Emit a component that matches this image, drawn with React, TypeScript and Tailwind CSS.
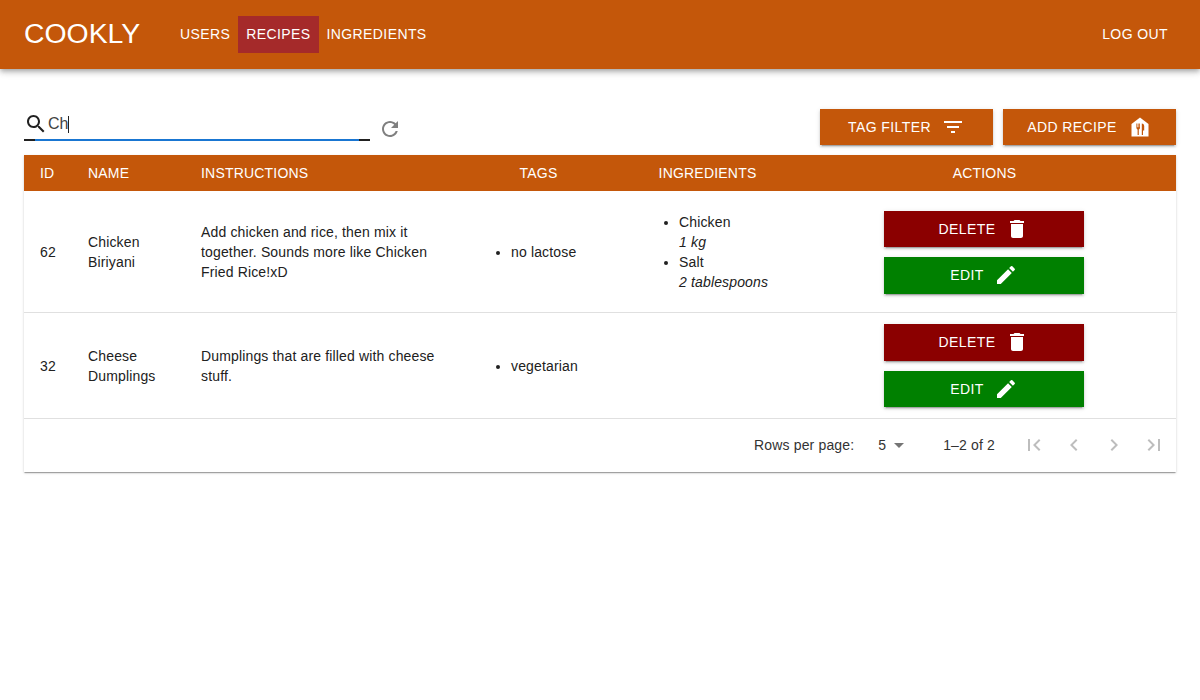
const FONT = "font-['Liberation_Sans',Arial,sans-serif]";

const ICONS = {
  search:
    "M15.5 14h-.79l-.28-.27C15.41 12.59 16 11.11 16 9.5 16 5.91 13.09 3 9.5 3S3 5.91 3 9.5 5.91 16 9.5 16c1.61 0 3.09-.59 4.23-1.57l.27.28v.79l5 4.99L20.49 19l-4.99-5zm-6 0C7.01 14 5 11.99 5 9.5S7.01 5 9.5 5 14 7.01 14 9.5 11.99 14 9.5 14z",
  refresh:
    "M17.65 6.35C16.2 4.9 14.21 4 12 4c-4.42 0-7.99 3.58-7.99 8s3.57 8 7.99 8c3.73 0 6.84-2.55 7.73-6h-2.08c-.82 2.33-3.04 4-5.65 4-3.31 0-6-2.69-6-6s2.69-6 6-6c1.66 0 3.14.69 4.22 1.78L13 11h7V4l-2.35 2.35z",
  filter: "M10 18h4v-2h-4v2zM3 6v2h18V6H3zm3 7h12v-2H6v2z",
  trash:
    "M6 19c0 1.1.9 2 2 2h8c1.1 0 2-.9 2-2V7H6v12zM19 4h-3.5l-1-1h-5l-1 1H5v2h14V4z",
  edit:
    "M3 17.25V21h3.75L17.81 9.94l-3.75-3.75L3 17.25zM20.71 7.04c.39-.39.39-1.02 0-1.41l-2.34-2.34a.9959.9959 0 0 0-1.41 0l-1.83 1.83 3.75 3.75 1.83-1.83z",
  first: "M18.41 16.59L13.82 12l4.59-4.59L17 6l-6 6 6 6zM6 6h2v12H6z",
  prev: "M15.41 7.41L14 6l-6 6 6 6 1.41-1.41L10.83 12z",
  next: "M10 6L8.59 7.41 13.17 12l-4.58 4.59L10 18l6-6z",
  last: "M5.59 7.41L10.18 12l-4.59 4.59L7 18l6-6-6-6zM16 6h2v12h-2z",
  dropdown: "M7 10l5 5 5-5z",
};

function Icon({ name, className }: { name: keyof typeof ICONS; className: string }) {
  return (
    <svg viewBox="0 0 24 24" fill="currentColor" className={className}>
      <path d={ICONS[name]} />
    </svg>
  );
}

function RecipeIcon() {
  return (
    <svg viewBox="0 0 24 24" className="ml-[11px] h-6 w-6">
      <path d="M12 2.5 20.5 9v12.5h-17V9z" fill="white" />
      <path
        d="M8.4 8.5v4.2c0 .9.5 1.5 1.2 1.7V20h1.2v-5.6c.7-.2 1.2-.8 1.2-1.7V8.5h-.8v3.7h-.6V8.5h-.8v3.7h-.6V8.5zM13.8 8.5V20H15v-4.5h1.2V11c0-1.4-1-2.5-2.4-2.5z"
        fill="#c4570a"
      />
    </svg>
  );
}

function Button({
  label,
  color,
  children,
  className,
}: {
  label: string;
  color: string;
  children: React.ReactNode;
  className: string;
}) {
  return (
    <button
      type="button"
      className={`flex items-center justify-center text-sm tracking-[0.4px] text-white uppercase shadow-[0_3px_1px_-2px_rgba(0,0,0,0.2),0_2px_2px_0_rgba(0,0,0,0.14),0_1px_5px_0_rgba(0,0,0,0.12)] ${color} ${className}`}
    >
      {label}
      {children}
    </button>
  );
}

function RowActions({ deleteHeight, editHeight }: { deleteHeight: string; editHeight: string }) {
  return (
    <div className="ml-[91px] flex w-[200px] flex-col gap-[10px]">
      <Button label="Delete" color="bg-[#8b0000]" className={`w-full ${deleteHeight}`}>
        <Icon name="trash" className="ml-[10px] h-6 w-6" />
      </Button>
      <Button label="Edit" color="bg-[#008000]" className={`w-full ${editHeight}`}>
        <Icon name="edit" className="ml-[10px] h-6 w-6" />
      </Button>
    </div>
  );
}

const HEADERS = [
  { label: "ID", className: "w-[48px] pl-4 text-left" },
  { label: "Name", className: "w-[113px] pl-4 text-left" },
  { label: "Instructions", className: "w-[270px] pl-4 text-left" },
  { label: "Tags", className: "w-[167px] text-center" },
  { label: "Ingredients", className: "w-[171px] text-center" },
  { label: "Actions", className: "text-center" },
];

export default function App() {
  return (
    <div className={`min-h-[700px] bg-white text-[#212121] ${FONT}`}>
      <header className="flex h-[69px] items-center bg-[#c4570a] pr-6 pl-6 text-white shadow-[0_2px_4px_-1px_rgba(0,0,0,0.2),0_4px_5px_0_rgba(0,0,0,0.14),0_1px_10px_0_rgba(0,0,0,0.12)]">
        <div className="mb-[3px] w-[148px] text-[28.4px] leading-none">COOKLY</div>
        <nav className="flex items-center text-sm leading-5 tracking-[0.4px] uppercase">
          <a className="px-2 pt-2 pb-[9px]">Users</a>
          <a className="bg-[#a52a2a] px-2 pt-2 pb-[9px]">Recipes</a>
          <a className="px-2 pt-2 pb-[9px]">Ingredients</a>
        </nav>
        <a className="mr-2 mb-[1px] ml-auto text-sm leading-5 tracking-[0.4px] uppercase">Log out</a>
      </header>

      <main className="px-6 pt-10">
        <div className="flex h-[46px] items-start justify-between">
          <div className="flex items-center">
            <div className="relative mt-[1px] flex h-[31px] w-[346px] items-center border-b-2 border-[#212121]">
              <Icon name="search" className="mb-[1px] h-6 w-6 shrink-0 text-[#212121]" />
              <span className="mb-[1px] flex items-center text-base text-[#424242]">
                Ch<span className="h-[17px] w-px bg-[#212121]" />
              </span>
              <div className="absolute right-[11px] -bottom-[2px] left-[11px] h-[2px] bg-[#1976d2]" />
            </div>
            <Icon name="refresh" className="mt-[8px] ml-2 h-6 w-6 text-[#808080]" />
          </div>
          <div className="flex gap-[10px]">
            <Button label="Tag filter" color="bg-[#c4570a]" className="h-9 w-[173px]">
              <Icon name="filter" className="ml-[10px] h-6 w-6" />
            </Button>
            <Button label="Add recipe" color="bg-[#c4570a]" className="h-9 w-[173px]">
              <RecipeIcon />
            </Button>
          </div>
        </div>

        <div className="shadow-[0_2px_1px_-1px_rgba(0,0,0,0.2),0_1px_1px_0_rgba(0,0,0,0.14),0_1px_3px_0_rgba(0,0,0,0.12)]">
          <table className="w-full table-fixed border-collapse text-sm tracking-[0.15px]">
            <thead>
              <tr className="h-9 bg-[#c4570a] tracking-[0.2px] text-white uppercase">
                {HEADERS.map((h) => (
                  <th key={h.label} className={`font-normal ${h.className}`}>
                    {h.label}
                  </th>
                ))}
              </tr>
            </thead>
            <tbody className="leading-5">
              <tr className="h-[121px] border-b border-[#e0e0e0]">
                <td className="pt-[2px] pl-4">62</td>
                <td className="pt-[2px] pl-4">
                  Chicken
                  <br />
                  Biriyani
                </td>
                <td className="pt-[2px] pr-4 pl-4">
                  Add chicken and rice, then mix it together. Sounds more like Chicken Fried Rice!xD
                </td>
                <td className="pt-[2px] pl-4">
                  <ul className="list-disc pl-10">
                    <li>no lactose</li>
                  </ul>
                </td>
                <td className="pt-[2px] pl-[17px]">
                  <ul className="list-disc pl-10">
                    <li>
                      Chicken
                      <br />
                      <em>1 kg</em>
                    </li>
                    <li>
                      Salt
                      <br />
                      <em>2 tablespoons</em>
                    </li>
                  </ul>
                </td>
                <td className="pt-[2px]">
                  <RowActions deleteHeight="h-9" editHeight="h-[37px]" />
                </td>
              </tr>
              <tr className="h-[106px] border-b border-[#e0e0e0]">
                <td className="pt-[2px] pl-4">32</td>
                <td className="pt-[2px] pl-4">
                  Cheese
                  <br />
                  Dumplings
                </td>
                <td className="pt-[2px] pr-4 pl-4">Dumplings that are filled with cheese stuff.</td>
                <td className="pt-[2px] pl-4">
                  <ul className="list-disc pl-10">
                    <li>vegetarian</li>
                  </ul>
                </td>
                <td />
                <td>
                  <RowActions deleteHeight="h-[37px]" editHeight="h-9" />
                </td>
              </tr>
            </tbody>
          </table>
          <div className="flex h-[53px] items-center justify-end pr-[10px] text-sm tracking-[0.15px] text-[#333333]">
            <span>Rows per page:</span>
            <span className="ml-6">5</span>
            <Icon name="dropdown" className="ml-[1px] h-6 w-6 text-[#757575]" />
            <span className="mr-[27px] ml-8">1–2 of 2</span>
            <div className="flex gap-4 text-[#bdbdbd]">
              <Icon name="first" className="h-6 w-6" />
              <Icon name="prev" className="h-6 w-6" />
              <Icon name="next" className="h-6 w-6" />
              <Icon name="last" className="h-6 w-6" />
            </div>
          </div>
        </div>
      </main>
    </div>
  );
}
